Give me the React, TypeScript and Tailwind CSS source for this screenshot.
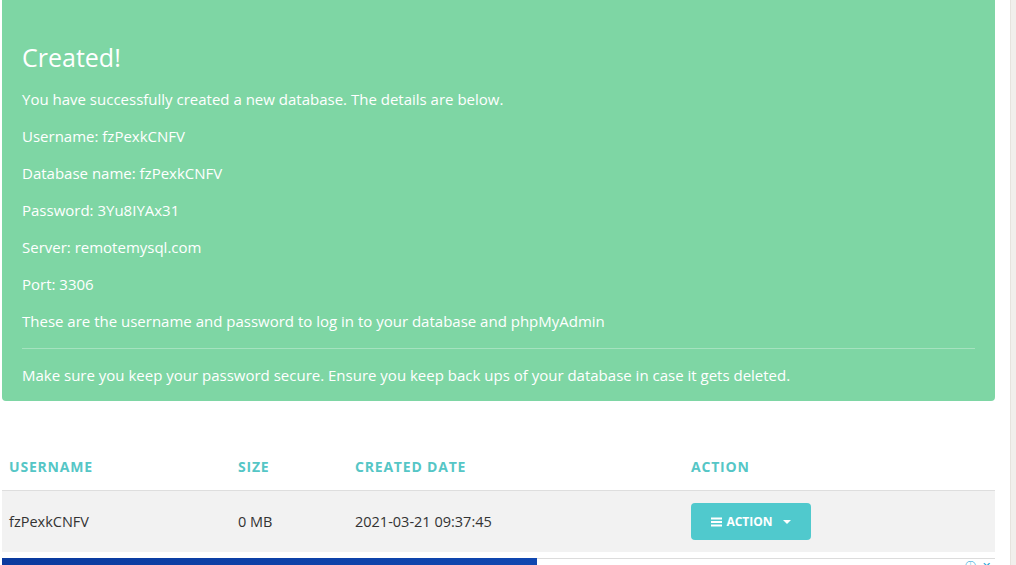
import React from 'react';

const DETAILS = [
    'You have successfully created a new database. The details are below.',
    'Username: fzPexkCNFV',
    'Database name: fzPexkCNFV',
    'Password: 3Yu8IYAx31',
    'Server: remotemysql.com',
    'Port: 3306',
    'These are the username and password to log in to your database and phpMyAdmin',
];

const COLUMNS = ['USERNAME', 'SIZE', 'CREATED DATE', 'ACTION'];

const App: React.FC = () => {
    return (
        <div className="flex h-[565px] w-[1016px] overflow-hidden bg-white font-['Open_Sans',sans-serif]">
            <div className="w-[1010px] pl-[2px]">
                <div className="w-[993px]">
                    {/* success alert */}
                    <div className="rounded-b bg-[#7ed6a4] px-5 pt-[43px] pb-[15px] text-white">
                        <h4 className="mb-[17px] text-[25px] leading-[29px]">Created!</h4>
                        {DETAILS.map((line, i) => (
                            <p key={i} className="mb-4 text-[15px] leading-[21px]">{line}</p>
                        ))}
                        <hr className="my-0 border-t border-white/30" />
                        <p className="mt-4 text-[15px] leading-[21px]">
                            Make sure you keep your password secure. Ensure you keep back ups of your database in case it gets deleted.
                        </p>
                    </div>

                    {/* databases table */}
                    <div className="mt-[42px]">
                        <div className="grid h-[48px] grid-cols-[229px_117px_336px_1fr] items-center border-b border-[#dedede] px-[7px]">
                            {COLUMNS.map(c => (
                                <div key={c} className="text-[14px] font-bold tracking-[0.8px] text-[#55c6c6]">{c}</div>
                            ))}
                        </div>
                        <div className="grid h-[61px] grid-cols-[229px_117px_336px_1fr] items-center bg-[#f2f2f2] px-[7px] text-[14.5px] text-[#333]">
                            <div>fzPexkCNFV</div>
                            <div>0 MB</div>
                            <div>2021-03-21 09:37:45</div>
                            <div>
                                <button className="flex h-[37px] w-[120px] items-center justify-center gap-[4px] rounded bg-[#50c9cd] text-[12px] font-bold text-white">
                                    <svg width="11" height="10" viewBox="0 0 11 10" fill="white">
                                        <rect x="0" y="0.5" width="11" height="2" />
                                        <rect x="0" y="4" width="11" height="2" />
                                        <rect x="0" y="7.5" width="11" height="2" />
                                    </svg>
                                    <span>ACTION</span>
                                    <span className="ml-[6px] h-0 w-0 border-x-[4px] border-t-[4px] border-x-transparent border-t-white" />
                                </button>
                            </div>
                        </div>
                    </div>

                    {/* ad strip */}
                    <div className="mt-[6px] flex h-[20px]">
                        <div className="w-[535px] bg-gradient-to-r from-[#0a3a9e] to-[#1047b0]" />
                        <div className="relative flex-1 border-t border-[#dcdcdc] bg-white">
                            <div className="absolute top-[1px] right-[4px] flex items-center gap-[6px] text-[11px] leading-none text-[#1aa3d6]">
                                <span>ⓘ</span>
                                <span>✕</span>
                            </div>
                        </div>
                    </div>
                </div>
            </div>
            <div className="w-[6px] border-l border-[#e6e3de] bg-[#f1efec]" />
        </div>
    );
};

export default App;
